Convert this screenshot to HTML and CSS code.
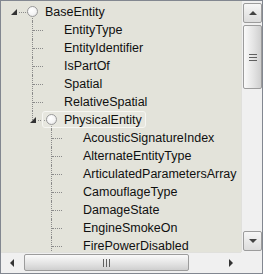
FILE: index.html
```html
<!DOCTYPE html>
<html>
<head>
<meta charset="utf-8">
<link rel="stylesheet" href="styles.css">
</head>
<body>
<div class="tree-view">
  <div class="viewport">
    <div class="tree">
      <div class="row">
        <span class="cell"><span class="expander"></span><span class="hdots-lead"></span></span>
        <span class="cell v-bottom"><span class="bullet"></span></span>
        <span class="label">BaseEntity</span>
      </div>
      <div class="row">
        <span class="cell"></span><span class="cell v h"></span><span class="cell"></span>
        <span class="label">EntityType</span>
      </div>
      <div class="row">
        <span class="cell"></span><span class="cell v h"></span><span class="cell"></span>
        <span class="label">EntityIdentifier</span>
      </div>
      <div class="row">
        <span class="cell"></span><span class="cell v h"></span><span class="cell"></span>
        <span class="label">IsPartOf</span>
      </div>
      <div class="row">
        <span class="cell"></span><span class="cell v h"></span><span class="cell"></span>
        <span class="label">Spatial</span>
      </div>
      <div class="row">
        <span class="cell"></span><span class="cell v h"></span><span class="cell"></span>
        <span class="label">RelativeSpatial</span>
      </div>
      <div class="row">
        <span class="cell"></span>
        <span class="cell v-top"><span class="expander"></span><span class="hdots-lead"></span></span>
        <span class="node selected">
          <span class="cell v-bottom"><span class="bullet"></span></span>
          <span class="label">PhysicalEntity</span>
        </span>
      </div>
      <div class="row">
        <span class="cell"></span><span class="cell"></span><span class="cell v h"></span><span class="cell"></span>
        <span class="label">AcousticSignatureIndex</span>
      </div>
      <div class="row">
        <span class="cell"></span><span class="cell"></span><span class="cell v h"></span><span class="cell"></span>
        <span class="label">AlternateEntityType</span>
      </div>
      <div class="row">
        <span class="cell"></span><span class="cell"></span><span class="cell v h"></span><span class="cell"></span>
        <span class="label">ArticulatedParametersArray</span>
      </div>
      <div class="row">
        <span class="cell"></span><span class="cell"></span><span class="cell v h"></span><span class="cell"></span>
        <span class="label">CamouflageType</span>
      </div>
      <div class="row">
        <span class="cell"></span><span class="cell"></span><span class="cell v h"></span><span class="cell"></span>
        <span class="label">DamageState</span>
      </div>
      <div class="row">
        <span class="cell"></span><span class="cell"></span><span class="cell v h"></span><span class="cell"></span>
        <span class="label">EngineSmokeOn</span>
      </div>
      <div class="row">
        <span class="cell"></span><span class="cell"></span><span class="cell v h"></span><span class="cell"></span>
        <span class="label">FirePowerDisabled</span>
      </div>
    </div>
  </div>
  <div class="vscroll">
    <div class="sbtn up"><span class="arrow-up"></span></div>
    <div class="vthumb"><span class="grip-h"></span><span class="grip-h"></span><span class="grip-h"></span></div>
    <div class="track-fill"></div>
    <div class="sbtn down"><span class="arrow-down"></span></div>
  </div>
  <div class="hscroll">
    <div class="hbtn"><span class="arrow-left"></span></div>
    <div class="hthumb"><span class="grip-v"></span><span class="grip-v"></span><span class="grip-v"></span></div>
    <div class="track-fill"></div>
    <div class="hbtn"><span class="arrow-right"></span></div>
  </div>
  <div class="corner"></div>
</div>
</body>
</html>
```
FILE: styles.css
```css
html, body {
  margin: 0;
  padding: 0;
  background: #ffffff;
}

.tree-view {
  width: 263px;
  height: 274px;
  box-sizing: border-box;
  border: 1px solid #828790;
  display: grid;
  grid-template-columns: 240px 21px;
  grid-template-rows: 251px 21px;
  background: #e3e3da;
  font-family: "Liberation Sans", Arial, sans-serif;
  font-size: 12.5px;
  color: #101010;
}

.viewport {
  overflow: hidden;
  padding: 2px 0 0 3px;
  box-sizing: border-box;
}

.tree {
  display: flex;
  flex-direction: column;
}

.row {
  display: flex;
  height: 18px;
  align-items: stretch;
  white-space: nowrap;
}

.cell {
  flex: none;
  width: 19px;
  height: 18px;
  position: relative;
}

.v::before,
.v-top::before,
.v-bottom::before {
  content: "";
  position: absolute;
  left: 9px;
  border-left: 1px dotted #8a8a8a;
}
.v::before { top: 0; bottom: 0; }
.v-top::before { top: 0; height: 9px; }
.v-bottom::before { top: 15px; bottom: 0; }

.h::after {
  content: "";
  position: absolute;
  left: 10px;
  top: 9px;
  width: 10px;
  border-top: 1px dotted #8a8a8a;
}

.hdots-lead {
  position: absolute;
  left: 15px;
  top: 9px;
  width: 9px;
  border-top: 1px dotted #8a8a8a;
}

.expander {
  position: absolute;
  left: 7px;
  top: 6px;
  width: 0;
  height: 0;
  border-bottom: 6px solid #333333;
  border-left: 6px solid transparent;
  z-index: 1;
}

.bullet {
  position: absolute;
  left: 4px;
  top: 3px;
  width: 9px;
  height: 9px;
  border-radius: 50%;
  border: 1px solid #9a9a9a;
  background: radial-gradient(circle at 40% 35%, #ffffff 0%, #f4f4f4 55%, #d8d8d8 100%);
  z-index: 1;
}

.label {
  margin-left: 3px;
  line-height: 18px;
  position: relative;
  z-index: 1;
}

.node {
  display: flex;
  height: 18px;
  position: relative;
}

.node.selected::after {
  content: "";
  position: absolute;
  left: 0;
  top: 0;
  right: -4px;
  height: 15px;
  border: 1px solid #f6f6f2;
  border-radius: 3px;
  background: rgba(255, 255, 255, 0.15);
  z-index: 0;
}

/* vertical scrollbar */
.vscroll {
  display: flex;
  flex-direction: column;
  align-items: stretch;
  padding: 2px 0 1px 1px;
  box-sizing: border-box;
  background: #f0f0f0;
  border-left: 1px solid #e0e0dc;
  gap: 1px;
}

.sbtn {
  flex: none;
  height: 18px;
  border: 1px solid #9c9c9c;
  border-radius: 2px;
  background: linear-gradient(to bottom, #f6f6f6, #dcdcdc);
  display: flex;
  align-items: center;
  justify-content: center;
}

.arrow-up {
  width: 0; height: 0;
  border-left: 4px solid transparent;
  border-right: 4px solid transparent;
  border-bottom: 4px solid #444;
}
.arrow-down {
  width: 0; height: 0;
  border-left: 4px solid transparent;
  border-right: 4px solid transparent;
  border-top: 4px solid #444;
}

.vthumb {
  flex: none;
  height: 62px;
  margin-top: 1px;
  border: 1px solid #9c9c9c;
  border-radius: 2px;
  background: linear-gradient(to right, #fafafa, #e2e2e2 60%, #cfcfcf);
  display: flex;
  flex-direction: column;
  align-items: center;
  justify-content: center;
  gap: 2px;
}

.grip-h {
  width: 8px;
  height: 1px;
  background: #606060;
}

.track-fill { flex: 1; }

/* horizontal scrollbar */
.hscroll {
  display: flex;
  align-items: stretch;
  padding: 1px 0 2px 0;
  box-sizing: border-box;
  background: #f0f0f0;
  border-top: 1px solid #e0e0dc;
  gap: 1px;
}

.hbtn {
  flex: none;
  width: 21px;
  display: flex;
  align-items: center;
  justify-content: center;
}

.arrow-left {
  width: 0; height: 0;
  border-top: 4px solid transparent;
  border-bottom: 4px solid transparent;
  border-right: 4px solid #333;
}
.arrow-right {
  width: 0; height: 0;
  border-top: 4px solid transparent;
  border-bottom: 4px solid transparent;
  border-left: 4px solid #333;
}

.hthumb {
  flex: none;
  width: 163px;
  margin-left: 1px;
  border: 1px solid #9c9c9c;
  border-radius: 2px;
  background: linear-gradient(to bottom, #fafafa, #e2e2e2 60%, #cfcfcf);
  display: flex;
  align-items: center;
  justify-content: center;
  gap: 2px;
}

.grip-v {
  width: 1px;
  height: 8px;
  background: #606060;
}

.corner {
  background: #f0f0f0;
}
```
